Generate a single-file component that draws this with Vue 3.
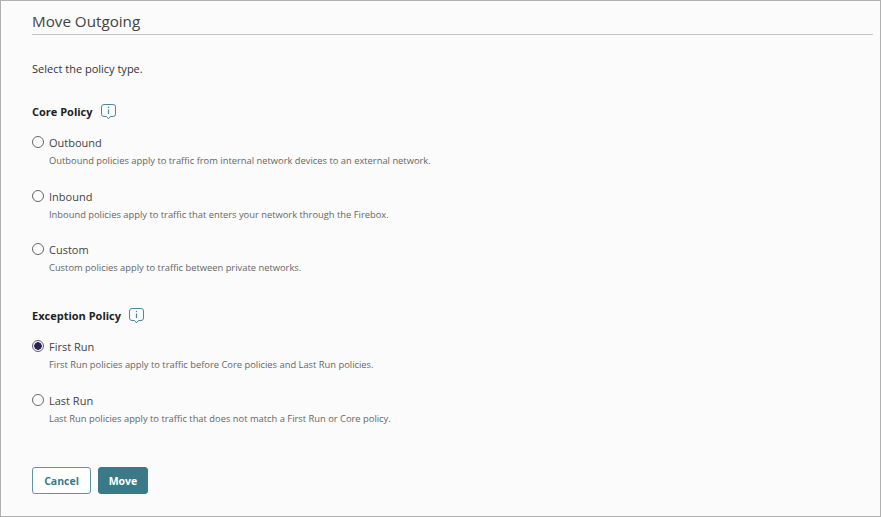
<template>
  <main class="page">
    <h1>Move Outgoing</h1>
    <p class="intro">Select the policy type.</p>

    <section v-for="group in groups" :key="group.title" class="group">
      <h2>
        {{ group.title }}
        <svg class="info" width="17" height="17" viewBox="0 0 17 17" fill="none">
          <path d="M4 1.5h9a2.5 2.5 0 0 1 2.5 2.5v7a2.5 2.5 0 0 1-2.5 2.5h-2.6L8.5 15.8 6.6 13.5H4A2.5 2.5 0 0 1 1.5 11V4A2.5 2.5 0 0 1 4 1.5z" stroke="#4a8a9c" stroke-width="1" />
          <path d="M8.5 6.5v4.5" stroke="#4a8a9c" stroke-width="1.2" />
          <circle cx="8.5" cy="4.5" r="0.7" fill="#4a8a9c" />
        </svg>
      </h2>
      <label v-for="option in group.options" :key="option.name" class="option">
        <span class="radio" :class="{ checked: selected === option.name }" @click="selected = option.name"></span>
        <span class="name">{{ option.name }}</span>
        <span class="desc">{{ option.desc }}</span>
      </label>
    </section>

    <div class="buttons">
      <button class="cancel">Cancel</button>
      <button class="move">Move</button>
    </div>
  </main>
</template>

<script setup>
  import { ref } from "vue";

  const selected = ref("First Run");

  const groups = [
    {
      title: "Core Policy",
      options: [
        { name: "Outbound", desc: "Outbound policies apply to traffic from internal network devices to an external network." },
        { name: "Inbound", desc: "Inbound policies apply to traffic that enters your network through the Firebox." },
        { name: "Custom", desc: "Custom policies apply to traffic between private networks." },
      ],
    },
    {
      title: "Exception Policy",
      options: [
        { name: "First Run", desc: "First Run policies apply to traffic before Core policies and Last Run policies." },
        { name: "Last Run", desc: "Last Run policies apply to traffic that does not match a First Run or Core policy." },
      ],
    },
  ];
</script>

<style>
  html,
  body {
    margin: 0;
    background: #fbfbfb;
  }
</style>

<style scoped>
  .page {
    box-sizing: border-box;
    width: 881px;
    height: 517px;
    padding: 0 7px 0 31px;
    border: 1px solid #b0b0b0;
    background: #fbfbfb;
    font-family: "Open Sans", sans-serif;
    color: #333;
    overflow: hidden;
  }

  h1 {
    margin: 0;
    height: 33px;
    border-bottom: 1px solid #c4c4c4;
    font-size: 15.2px;
    font-weight: 400;
    line-height: 41px;
    color: #444;
  }

  .intro {
    margin: 26px 0 0;
    font-size: 11px;
    line-height: 16px;
  }

  .group {
    margin-top: 25.4px;
  }

  .group + .group {
    margin-top: 12.1px;
  }

  h2 {
    display: flex;
    align-items: center;
    gap: 7px;
    height: 18px;
    margin: 0 0 13px;
    font-size: 11px;
    font-weight: 700;
    color: #222;
  }

  .option {
    display: grid;
    grid-template-columns: 17px 1fr;
    grid-template-rows: 18px 18px;
    align-content: start;
    align-items: center;
    height: 53.7px;
  }

  .radio {
    box-sizing: border-box;
    width: 12px;
    height: 12px;
    margin-top: -1px;
    border: 1px solid #666;
    border-radius: 50%;
    background: #fff;
  }

  .radio.checked {
    border-color: #5a5a7a;
    background: radial-gradient(circle, #2b2350 0 3.5px, #fff 4px);
  }

  .name {
    font-size: 11px;
    color: #444;
  }

  .desc {
    grid-column: 2;
    font-size: 9.35px;
    color: #666;
  }

  .buttons {
    display: flex;
    gap: 7px;
    margin-top: 22.3px;
  }

  button {
    box-sizing: border-box;
    height: 27px;
    padding-top: 2px;
    border-radius: 3px;
    border: 1px solid #3a7a88;
    font-family: inherit;
    font-size: 10.5px;
    font-weight: 700;
  }

  .cancel {
    width: 59px;
    background: #fff;
    color: #3a7a88;
    border-color: #5f96a2;
  }

  .move {
    width: 50px;
    background: #3a7a88;
    color: #fff;
  }
</style>
